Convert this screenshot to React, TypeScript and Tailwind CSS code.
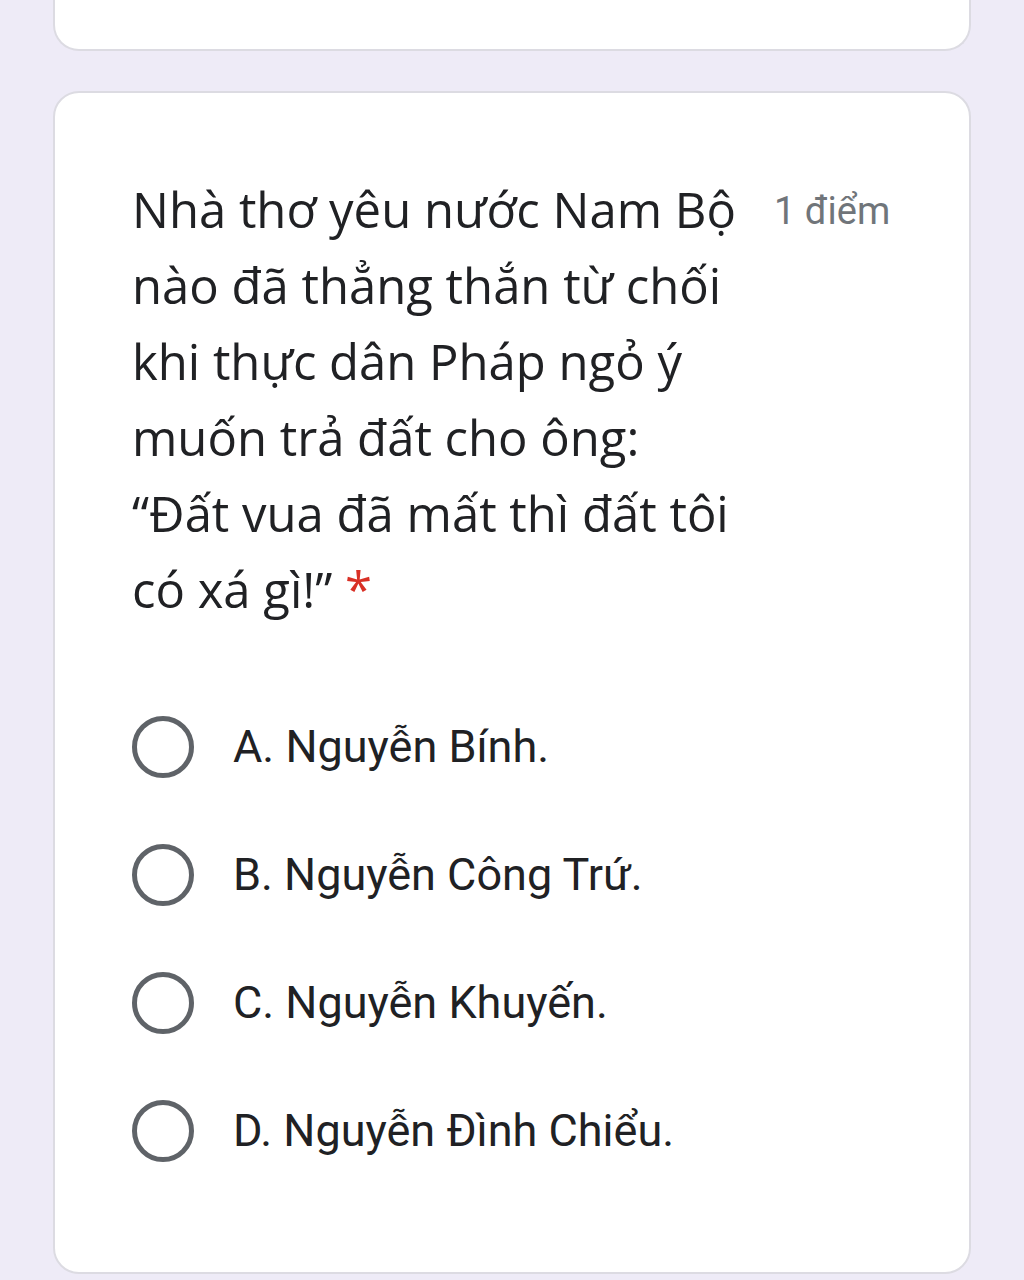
import React from "react";

const options = [
  "A. Nguyễn Bính.",
  "B. Nguyễn Công Trứ.",
  "C. Nguyễn Khuyến.",
  "D. Nguyễn Đình Chiểu.",
];

const lines = [
  "Nhà thơ yêu nước Nam Bộ",
  "nào đã thẳng thắn từ chối",
  "khi thực dân Pháp ngỏ ý",
  "muốn trả đất cho ông:",
  "“Đất vua đã mất thì đất tôi",
];

export default function App() {
  return (
    <div className="min-h-[1280px] w-[1024px] bg-[#eeebf7] flex flex-col items-center overflow-hidden">
      <div className="w-[918px] h-[51px] bg-white border-x-2 border-b-2 border-[#dcdbe2] rounded-b-[26px]" />
      <div className="mt-[40px] w-[918px] bg-white border-2 border-[#dcdbe2] rounded-[26px] pl-[77px] pr-[60px] pt-[78px] pb-[77px]">
        <div className="flex items-start">
          <div
            className="w-[640px] text-[#202124] text-[49px] leading-[76px] whitespace-nowrap"
            style={{ fontFamily: '"Open Sans", "Noto Sans", sans-serif' }}
          >
            {lines.map((l) => (
              <div key={l}>{l}</div>
            ))}
            <div>
              có xá gì!”{" "}
              <span className="text-[#d93025]">*</span>
            </div>
          </div>
          <div
            className="ml-[2px] pt-[2px] text-[#70757a] text-[38px] leading-[76px] whitespace-nowrap"
            style={{ fontFamily: 'Roboto, sans-serif' }}
          >
            1 điểm
          </div>
        </div>
        <div className="mt-[56px] flex flex-col">
          {options.map((o) => (
            <div key={o} className="h-[128px] flex items-center">
              <div className="w-[62px] h-[62px] rounded-full border-[5px] border-[#5f6368] shrink-0" />
              <div
                className="ml-[39px] text-[#202124] text-[45px] leading-[60px]"
                style={{ fontFamily: 'Roboto, sans-serif' }}
              >
                {o}
              </div>
            </div>
          ))}
        </div>
      </div>
    </div>
  );
}
